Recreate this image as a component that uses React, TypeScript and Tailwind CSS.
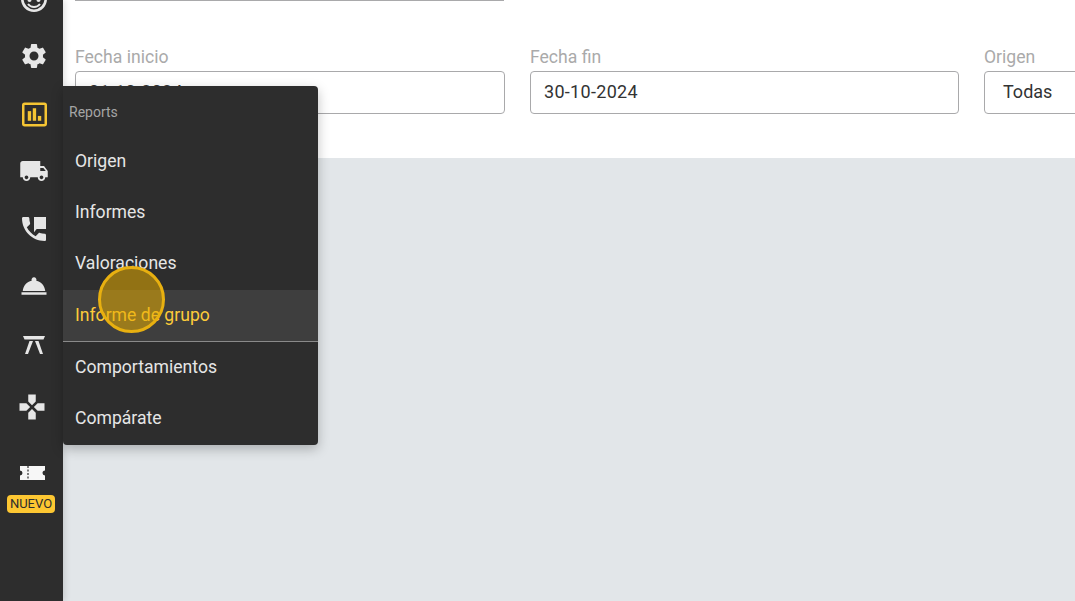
import React from "react";
import { MdSettings, MdLocalShipping, MdRoomService, MdGamepad } from "react-icons/md";

function Field({ label, value, className, inset }: { label: string; value: string; className: string; inset: string }) {
  return (
    <div className={`flex flex-col shrink-0 ${className}`}>
      <label className="text-[17.6px] leading-[22px] text-[#aaaaaa] h-[25px]">{label}</label>
      <div className={`h-[43px] pb-[2px] border border-[#a9a9ab] rounded-[4px] flex items-center text-[#333333] text-[18px] ${inset}`}>{value}</div>
    </div>
  );
}

function FaceIcon() {
  return (
    <svg width="26" height="26" viewBox="0 0 26 26" fill="none" className="block">
      <circle cx="13" cy="13" r="11.700" stroke="#e6e6e6" strokeWidth="2.600" />
      <circle cx="8.500" cy="14" r="2" fill="#e6e6e6" />
      <circle cx="17.500" cy="14" r="2" fill="#e6e6e6" />
      <path d="M7 18c1.500 2 3.500 3 6 3s4.500-1 6-3" stroke="#e6e6e6" strokeWidth="2" />
    </svg>
  );
}

function ReportIcon() {
  return (
    <svg width="25" height="25" viewBox="0 0 26 25" className="block">
      <rect x="1.300" y="1.300" width="23.400" height="22.400" rx="1.500" fill="none" stroke="#f5c533" strokeWidth="2.600" />
      <rect x="6" y="9" width="3.500" height="10" fill="#f5c533" />
      <rect x="11.200" y="6" width="3.500" height="13" fill="#f5c533" />
      <rect x="16.500" y="14" width="3.500" height="5" fill="#f5c533" />
    </svg>
  );
}

function PhoneIcon() {
  return (
    <svg width="32" height="32" viewBox="0 0 24 24" fill="#e6e6e6" className="block">
      <path d="M20 15.500c-1.250 0-2.450-.2-3.570-.57-.35-.11-.74-.03-1.020.24l-2.200 2.200c-2.830-1.440-5.150-3.750-6.590-6.590l2.200-2.210c.28-.26.36-.65.25-1C8.700 6.450 8.500 5.250 8.500 4c0-.55-.45-1-1-1H4c-.55 0-1 .45-1 1 0 9.390 7.610 17 17 17 .55 0 1-.45 1-1v-3.500c0-.55-.45-1-1-1z" />
      <path d="M12 3h9v9h-7l-2 2.500z" />
    </svg>
  );
}

function TableIcon() {
  return (
    <svg width="22" height="18" viewBox="0 0 22 18" fill="#e6e6e6" className="block">
      <path d="M0 0h22l-1.500 3.500h-19z" />
      <path d="M6.500 5H10L5 18H2z" />
      <path d="M12 5h3.500L20 18h-3z" />
    </svg>
  );
}

function TicketIcon() {
  return (
    <svg width="25" height="14" viewBox="0 0 25 14" className="block">
      <path d="M0 0h25v4.500a2.500 2.500 0 0 0 0 5V14H0V9.500a2.500 2.500 0 0 0 0-5z" fill="#f7f7f7" />
      <path d="M8 0v14" stroke="#2d2d2d" strokeWidth="1.200" strokeDasharray="2 1.500" />
    </svg>
  );
}

const items: [string, string][] = [
  ["Origen", "h-[51px]"],
  ["Informes", "h-[51px]"],
  ["Valoraciones", "h-[52px] pb-[2px]"],
];
const row = "pl-[12px] flex items-center text-[17.6px] font-[450] text-[#e6e6e6]";

export default function App() {
  return (
    <div className="relative w-[1075px] h-[601px] overflow-hidden flex bg-[#e2e6e9] font-['Roboto',sans-serif]">
      <aside className="w-[63px] shrink-0 bg-[#2d2d2d] flex flex-col text-[#e6e6e6] relative z-10 shadow-[2px_0_6px_rgba(0,0,0,0.12)]">
        <div className="h-[27px] pl-[21px] -mt-[14px] mb-[14px]"><FaceIcon /></div>
        <div className="h-[58px] flex items-center justify-center pl-[5px]"><MdSettings size={30} /></div>
        <div className="h-[58px] flex items-center justify-center pl-[5px]"><ReportIcon /></div>
        <div className="h-[56px] flex items-center justify-center pl-[5px]"><MdLocalShipping size={30} /></div>
        <div className="h-[60px] flex items-center justify-center pl-[5px]"><PhoneIcon /></div>
        <div className="h-[54px] flex items-center justify-center pl-[5px]"><MdRoomService size={30} /></div>
        <div className="h-[64px] flex items-center justify-center pl-[5px]"><TableIcon /></div>
        <div className="h-[60px] flex items-center justify-center"><MdGamepad size={30} /></div>
        <div className="mt-[24px] h-[24px] flex items-center justify-center pl-[2px]"><TicketIcon /></div>
        <div className="mt-[10px] flex justify-center pr-px">
          <span className="w-[48px] h-[18px] bg-[#fdc732] text-[#2d2d2d] text-[13px] leading-[18px] text-center rounded-[4px]">NUEVO</span>
        </div>
      </aside>

      <main className="flex-1 min-w-0">
        <section className="h-[158px] bg-white pl-[12px] flex flex-col overflow-hidden">
          <div className="w-[429px] h-px bg-[#a9a9ab]" />
          <div className="flex gap-[25px] mt-[45px]">
            <Field label="Fecha inicio" value="01-10-2024" className="w-[430px]" inset="pl-[13px] tracking-[0.3px]" />
            <Field label="Fecha fin" value="30-10-2024" className="w-[429px]" inset="pl-[13px] tracking-[0.3px]" />
            <Field label="Origen" value="Todas" className="w-[200px]" inset="pl-[18px]" />
          </div>
        </section>
      </main>

      <div className="absolute left-[63px] top-[86px] w-[255px] h-[359px] bg-[#2d2d2d] rounded-r-[4px] rounded-bl-[4px] shadow-[0_4px_12px_rgba(0,0,0,0.25)] z-20 flex flex-col">
        <div className="h-[50px] pl-[6px] pt-[17px] text-[14px] leading-[18px] text-[#a5a5a5]">Reports</div>
        {items.map(([t, h]) => (
          <div key={t} className={`${h} ${row}`}>{t}</div>
        ))}
        <div className="h-[52px] pl-[12px] flex items-center text-[17.6px] font-[450] text-[#fdcb3a] bg-[#3e3e3e] border-b border-[#8a8a8a]">Informe de grupo</div>
        <div className={`h-[51px] ${row}`}>Comportamientos</div>
        <div className={`h-[51px] ${row}`}>Compárate</div>
      </div>

      <div className="absolute left-[98px] top-[266px] w-[67px] h-[67px] rounded-full border-[3px] border-[#e8b010] bg-[#e6ac00]/55 z-30" />
    </div>
  );
}
